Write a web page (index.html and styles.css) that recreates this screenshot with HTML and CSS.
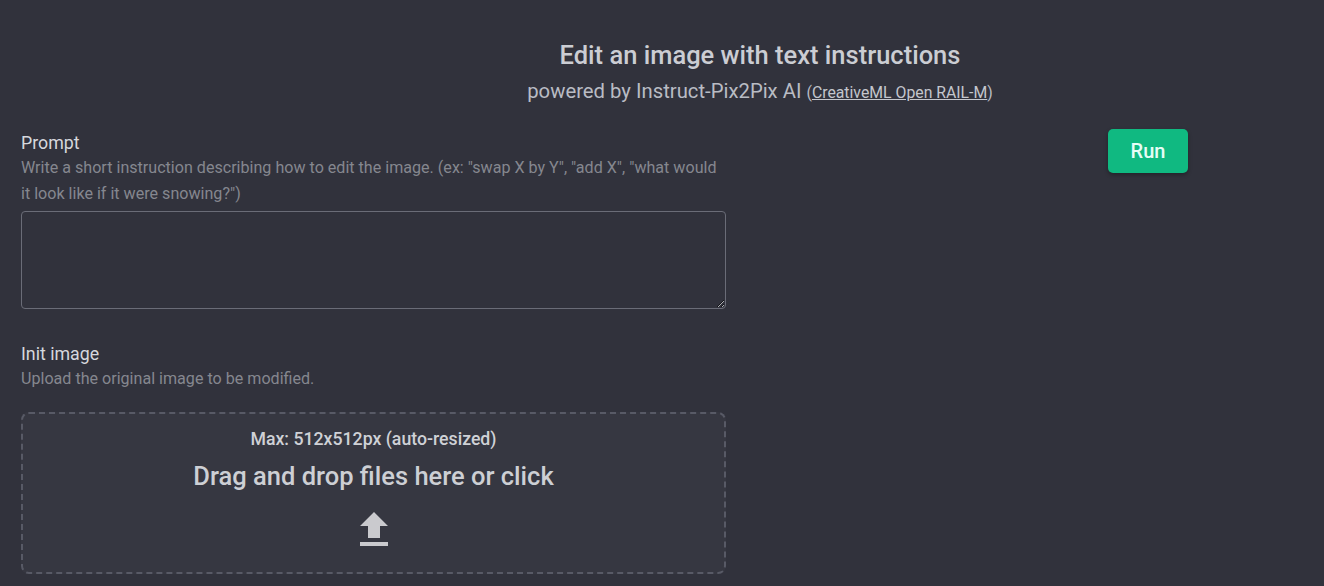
FILE: index.html
```html
<!DOCTYPE html>
<html lang="en">
<head>
    <meta charset="UTF-8">
    <title>Instruct-Pix2Pix</title>
    <link rel="stylesheet" href="styles.css">
</head>
<body>
    <div class="header">
        <h1>Edit an image with text instructions</h1>
        <p class="sub">powered by Instruct-Pix2Pix AI <span class="lic">(<a href="#">CreativeML Open RAIL-M</a>)</span></p>
    </div>

    <div class="main">
        <div class="form">
            <div class="field">
                <label class="label">Prompt</label>
                <div class="desc">Write a short instruction describing how to edit the image. (ex: "swap X by Y", "add X", "what would it look like if it were snowing?")</div>
                <textarea class="input"></textarea>
            </div>

            <div class="field">
                <label class="label">Init image</label>
                <div class="desc">Upload the original image to be modified.</div>
                <div class="drop">
                    <div class="max">Max: 512x512px (auto-resized)</div>
                    <div class="dnd">Drag and drop files here or click</div>
                    <svg class="up" viewBox="0 0 24 24" width="48" height="48"><path d="M9 16h6v-6h4l-7-7-7 7h4zm-4 2h14v2H5z" fill="currentColor"/></svg>
                </div>
            </div>
        </div>

        <div class="actions">
            <button class="btn">Run</button>
        </div>
    </div>
</body>
</html>
```

FILE: styles.css
```css
* {
    margin: 0;
    padding: 0;
    box-sizing: border-box;
}

body {
    background: #31323c;
    font-family: Roboto, "Liberation Sans", sans-serif;
    color: #d2d4da;
    padding: 40px 21px 0;
    overflow: hidden;
}

.header {
    padding-left: 196px;
    text-align: center;
}

.header h1 {
    font-size: 25.5px;
    font-weight: 500;
    color: #cbcdd3;
    line-height: 30px;
}

.sub {
    margin-top: 9px;
    font-size: 20.3px;
    color: #b9bcc4;
    line-height: 24px;
}

.lic {
    font-size: 15.8px;
}

.lic a {
    color: #c4c6cd;
}

.main {
    display: flex;
    margin-top: 26px;
}

.form {
    width: 705px;
}

.field {
    display: flex;
    flex-direction: column;
    margin-bottom: 33px;
}

.label {
    font-size: 17.8px;
    color: #d6d8dd;
    line-height: 24px;
}

.desc {
    font-size: 16.1px;
    color: #85878f;
    line-height: 26px;
    padding-right: 4px;
}

.input {
    margin-top: 4px;
    height: 98px;
    background: transparent;
    border: 1px solid #6a6c77;
    border-radius: 4px;
    resize: vertical;
    color: #d2d4da;
    font-family: inherit;
}

.drop {
    margin-top: 20px;
    height: 162px;
    border: 2px dashed #585a66;
    border-radius: 8px;
    background: #363741;
    display: flex;
    flex-direction: column;
    align-items: center;
    padding-top: 13px;
}

.max {
    font-size: 17.7px;
    font-weight: 500;
    color: #cfd1d6;
    line-height: 24px;
}

.dnd {
    margin-top: 10px;
    font-size: 25.5px;
    font-weight: 500;
    color: #cdcfd4;
    line-height: 30px;
}

.up {
    margin-top: 15px;
    color: #cacace;
}

.actions {
    flex: 1;
    display: flex;
    justify-content: flex-end;
    padding-right: 115px;
    align-items: flex-start;
}

.btn {
    margin-top: -2px;
    width: 80px;
    height: 44px;
    background: #10b981;
    color: #e6fdf6;
    border: none;
    border-radius: 5px;
    font-family: inherit;
    font-size: 20px;
    font-weight: 500;
    box-shadow: 0 2px 4px rgba(0, 0, 0, 0.3);
}
```
